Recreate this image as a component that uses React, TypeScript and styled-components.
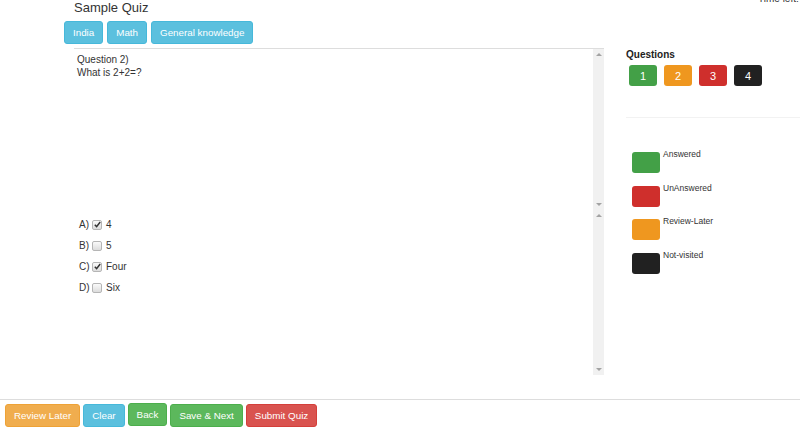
import React from 'react'
import styled, { createGlobalStyle } from 'styled-components'

const GlobalStyle = createGlobalStyle`
  html, body {
    margin: 0;
    padding: 0;
    background: #fff;
    overflow: hidden;
  }
  body {
    font-family: "Liberation Sans", Arial, sans-serif;
    color: #333;
  }
`

const Page = styled.div`
  width: 800px;
  height: 445px;
  display: flex;
  flex-direction: column;
  overflow: hidden;
`

const Header = styled.div`
  display: flex;
  justify-content: space-between;
  align-items: flex-start;
  height: 17px;
`

const Title = styled.div`
  margin-left: 74px;
  margin-top: 0;
  font-size: 13px;
  line-height: 15px;
  color: #333;
`

const TimeLeft = styled.div`
  margin-top: -7px;
  font-size: 10px;
  line-height: 12px;
  white-space: nowrap;
  width: 42px;
  overflow: hidden;
  color: #333;

  span {
    color: #f0ad4e;
  }
`

const TabRow = styled.div`
  display: flex;
  gap: 4px;
  padding-left: 64px;
  margin-top: 4px;
`

const Btn = styled.button<{ $bg: string; $border: string; $raise?: boolean }>`
  height: 23px;
  padding: 0 8px;
  font-family: "Liberation Sans", Arial, sans-serif;
  font-size: 9.8px;
  color: #fff;
  background: ${p => p.$bg};
  border: 1px solid ${p => p.$border};
  border-radius: 3px;
  cursor: pointer;
  ${p => (p.$raise ? 'transform: translateY(-1px);' : '')}
`

const Main = styled.div`
  display: flex;
  margin-top: 4px;
`

const QuestionColumn = styled.div`
  margin-left: 74px;
  width: 530px;
  border-top: 1px solid #ddd;
  display: flex;
  flex-direction: column;
`

const Pane = styled.div<{ $h: number }>`
  display: flex;
  height: ${p => p.$h}px;
`

const PaneBody = styled.div<{ $pt: number; $pl: number }>`
  flex: 1;
  padding: ${p => p.$pt}px 0 0 ${p => p.$pl}px;
  font-size: 10px;
  line-height: 13px;
  color: #333;
`

const Track = styled.div`
  width: 11px;
  background: #f1f1f1;
  display: flex;
  flex-direction: column;
  justify-content: space-between;
  align-items: center;
  padding: 4px 0;
  box-sizing: border-box;
`

const Arrow = styled.div<{ $down?: boolean }>`
  width: 0;
  height: 0;
  border-left: 3px solid transparent;
  border-right: 3px solid transparent;
  ${p =>
    p.$down
      ? 'border-top: 3px solid #a3a3a3;'
      : 'border-bottom: 3px solid #a3a3a3;'}
`

const OptionRow = styled.div`
  display: flex;
  align-items: center;
  height: 21px;
  font-size: 10px;
  color: #333;
`

const OptionLetter = styled.span`
  width: 13px;
`

const Check = styled.span`
  width: 8px;
  height: 8px;
  border: 1px solid #b5b5b5;
  border-radius: 2px;
  background: linear-gradient(#fafafa, #dcdcdc);
  margin-right: 4px;
  display: inline-flex;
  align-items: center;
  justify-content: center;
`

const Side = styled.div`
  margin-left: 22px;
  flex: 1;
  display: flex;
  flex-direction: column;
`

const SideTitle = styled.div`
  font-size: 10px;
  font-weight: bold;
  line-height: 12px;
  margin-top: 1px;
  color: #222;
`

const NumRow = styled.div`
  display: flex;
  gap: 7px;
  margin-top: 4px;
  padding-left: 3px;
`

const NumBtn = styled.div<{ $bg: string }>`
  width: 28px;
  height: 21px;
  border-radius: 3px;
  background: ${p => p.$bg};
  color: #fff;
  font-size: 11px;
  display: flex;
  align-items: center;
  justify-content: center;
`

const Divider = styled.div`
  height: 1px;
  background: #f2f2f2;
  margin-top: 31px;
`

const Legend = styled.div`
  display: flex;
  flex-direction: column;
  gap: 12.5px;
  margin-top: 34px;
  padding-left: 6px;
`

const LegendItem = styled.div`
  display: flex;
  align-items: flex-start;
  gap: 3px;
`

const Swatch = styled.div<{ $bg: string }>`
  width: 28px;
  height: 21px;
  border-radius: 3px;
  background: ${p => p.$bg};
`

const LegendLabel = styled.span`
  font-size: 8.5px;
  line-height: 10px;
  margin-top: -3px;
  color: #333;
`

const Footer = styled.div`
  margin-top: auto;
  margin-bottom: 18px;
  border-top: 1px solid #ddd;
  padding: 4px 0 0 5px;
  display: flex;
  gap: 3px;
`

const colors = {
  green: '#43a047',
  orange: '#ef971f',
  red: '#cf2f2c',
  black: '#212121',
}

const CheckMark = () => (
  <svg width="7" height="7" viewBox="0 0 7 7">
    <path d="M0.8 3.8 L2.6 5.6 L6.2 1" stroke="#333" strokeWidth="1.5" fill="none" />
  </svg>
)

const options = [
  { letter: 'A)', text: '4', checked: true },
  { letter: 'B)', text: '5', checked: false },
  { letter: 'C)', text: 'Four', checked: true },
  { letter: 'D)', text: 'Six', checked: false },
]

const ScrollTrack = () => (
  <Track>
    <Arrow />
    <Arrow $down />
  </Track>
)

export default function App() {
  return (
    <Page>
      <GlobalStyle />
      <Header>
        <Title>Sample Quiz</Title>
        <TimeLeft>
          Time left: <span>00:09:41</span>
        </TimeLeft>
      </Header>

      <TabRow>
        <Btn $bg="#5bc0de" $border="#46b8da">India</Btn>
        <Btn $bg="#5bc0de" $border="#46b8da">Math</Btn>
        <Btn $bg="#5bc0de" $border="#46b8da">General knowledge</Btn>
      </TabRow>

      <Main>
        <QuestionColumn>
          <Pane $h={161}>
            <PaneBody $pt={4} $pl={3}>
              Question 2)
              <br />
              What is 2+2=?
            </PaneBody>
            <ScrollTrack />
          </Pane>
          <Pane $h={165}>
            <PaneBody $pt={4} $pl={5}>
              {options.map(o => (
                <OptionRow key={o.letter}>
                  <OptionLetter>{o.letter}</OptionLetter>
                  <Check>{o.checked && <CheckMark />}</Check>
                  {o.text}
                </OptionRow>
              ))}
            </PaneBody>
            <ScrollTrack />
          </Pane>
        </QuestionColumn>

        <Side>
          <SideTitle>Questions</SideTitle>
          <NumRow>
            <NumBtn $bg={colors.green}>1</NumBtn>
            <NumBtn $bg={colors.orange}>2</NumBtn>
            <NumBtn $bg={colors.red}>3</NumBtn>
            <NumBtn $bg={colors.black}>4</NumBtn>
          </NumRow>
          <Divider />
          <Legend>
            <LegendItem>
              <Swatch $bg={colors.green} />
              <LegendLabel>Answered</LegendLabel>
            </LegendItem>
            <LegendItem>
              <Swatch $bg={colors.red} />
              <LegendLabel>UnAnswered</LegendLabel>
            </LegendItem>
            <LegendItem>
              <Swatch $bg={colors.orange} />
              <LegendLabel>Review-Later</LegendLabel>
            </LegendItem>
            <LegendItem>
              <Swatch $bg={colors.black} />
              <LegendLabel>Not-visited</LegendLabel>
            </LegendItem>
          </Legend>
        </Side>
      </Main>

      <Footer>
        <Btn $bg="#f0ad4e" $border="#eea236">Review Later</Btn>
        <Btn $bg="#5bc0de" $border="#46b8da">Clear</Btn>
        <Btn $bg="#5cb85c" $border="#4cae4c" $raise>Back</Btn>
        <Btn $bg="#5cb85c" $border="#4cae4c">Save &amp; Next</Btn>
        <Btn $bg="#d9534f" $border="#d43f3a">Submit Quiz</Btn>
      </Footer>
    </Page>
  )
}
